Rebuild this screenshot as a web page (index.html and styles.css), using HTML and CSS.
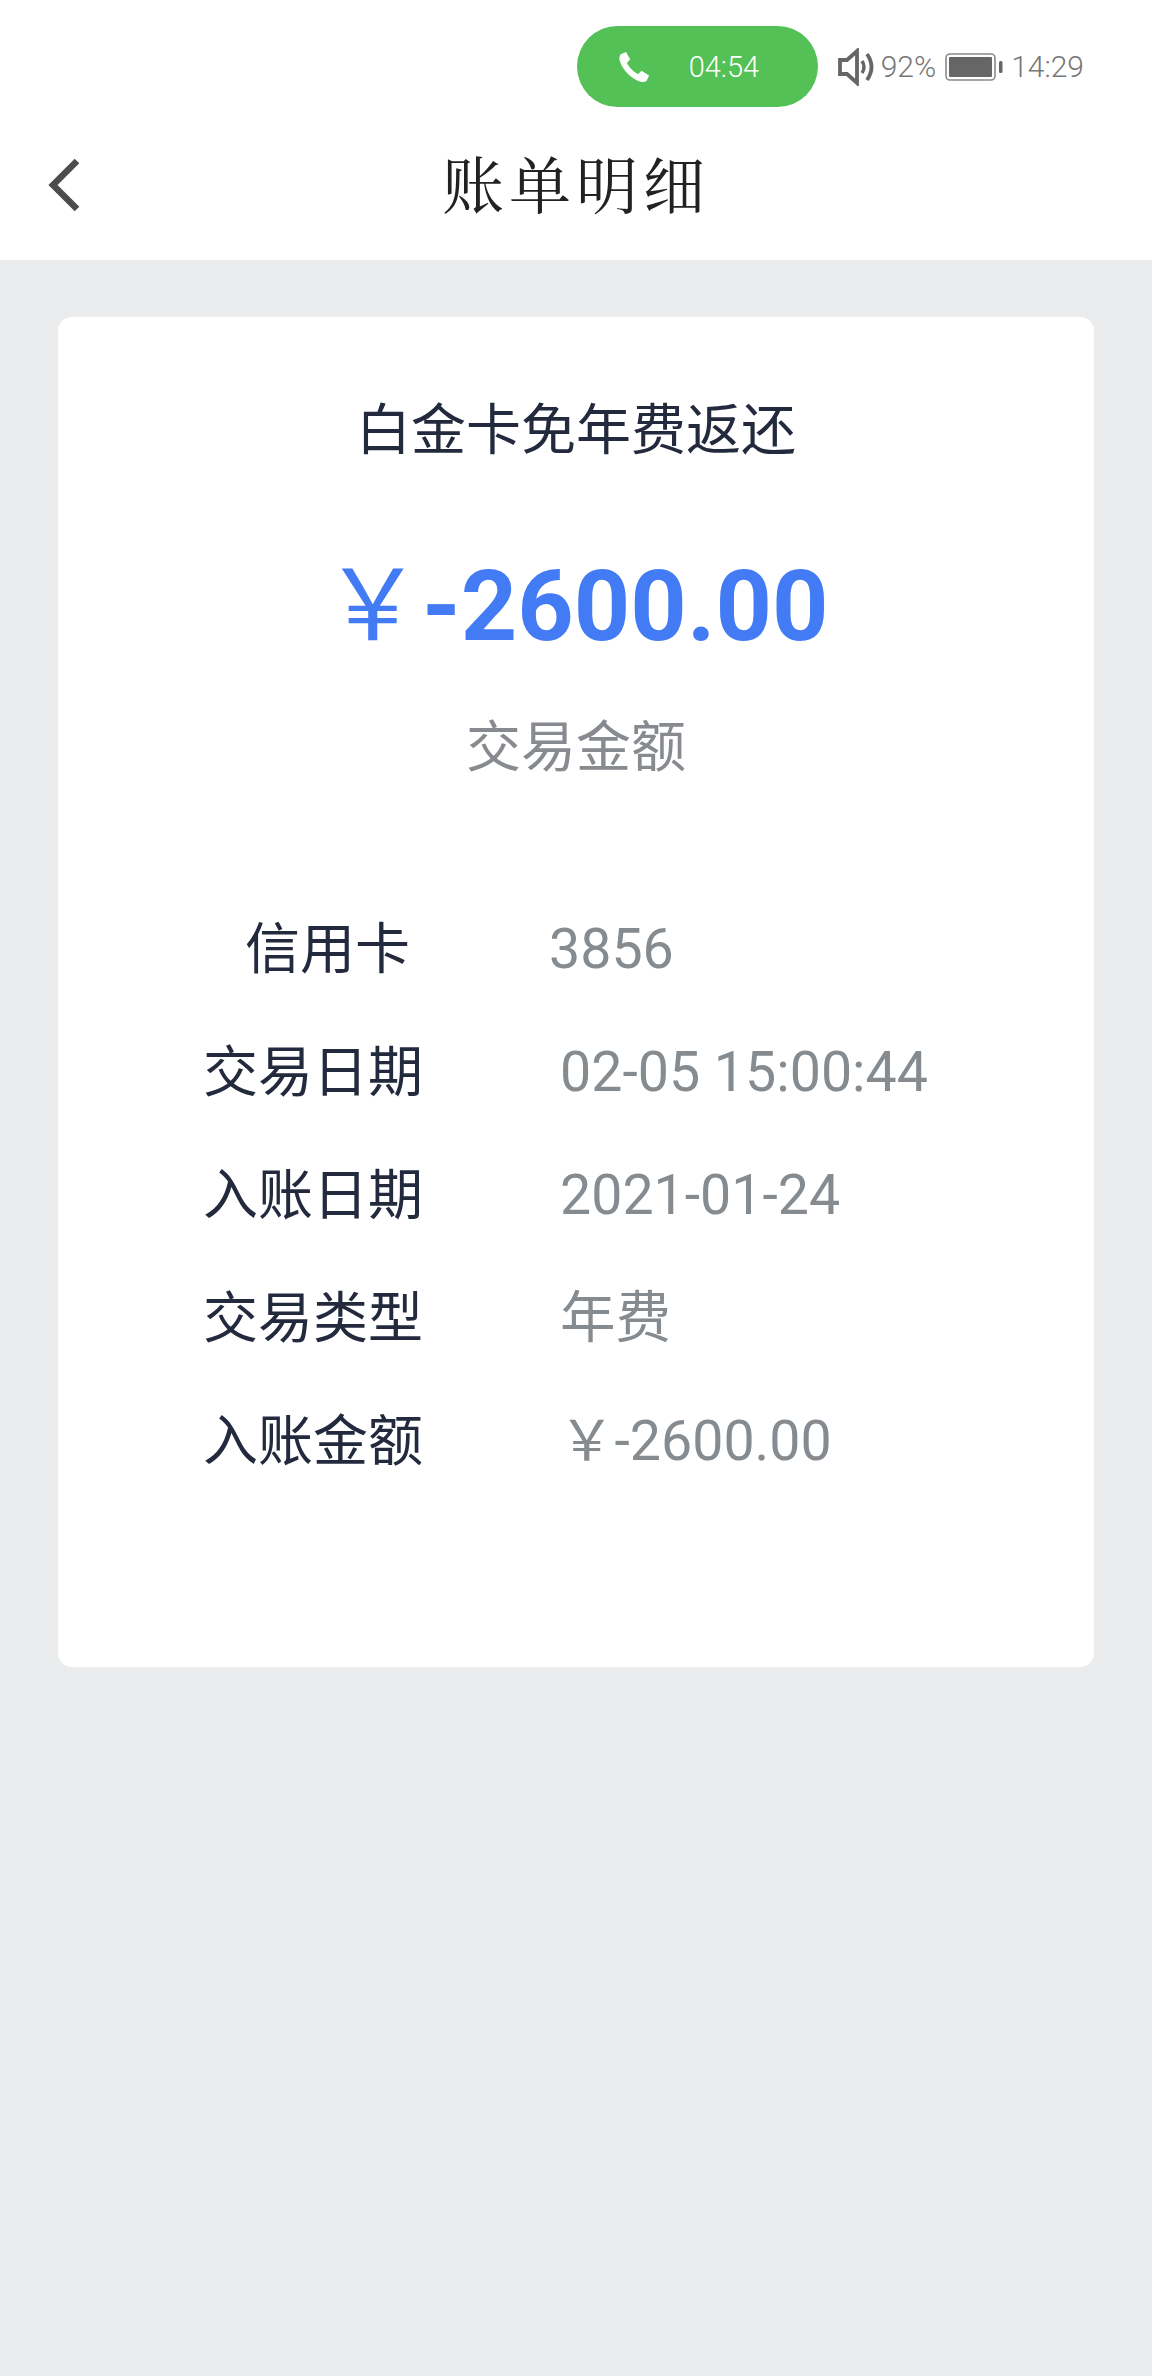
FILE: index.html
```html
<!DOCTYPE html>
<html lang="zh-CN">
<head>
    <meta charset="UTF-8">
    <meta name="viewport" content="width=device-width, initial-scale=1.0">
    <title>账单明细</title>
    <link rel="stylesheet" href="styles.css">
</head>
<body>
    <header class="header">
        <div class="status-bar">
            <div class="call-pill">
                <svg class="call-icon" viewBox="0 0 34 34">
                    <path d="M3 3.5 L8.5 1 L13 9 L9.5 12.5 C11.5 17 16.5 22.5 21.5 24.5 L25 21 L33 26 L30.5 31.5 C29 33 26 33.5 23 32.5 C13 29 5 20 2 11 C1 8 1.5 5 3 3.5 Z" fill="#fff"/>
                </svg>
                <span class="call-time">04:54</span>
            </div>
            <svg class="volume-icon" viewBox="0 0 38 38">
                <path d="M2 12 H9 L19 3 V35 L9 26 H2 Z" fill="none" stroke="#666" stroke-width="3.8"/>
                <path d="M24 13 Q28 19 24 25" fill="none" stroke="#666" stroke-width="3.4"/>
                <path d="M29 6 Q38 19 29 32" fill="none" stroke="#666" stroke-width="3.8"/>
            </svg>
            <span class="status-text percent">92%</span>
            <svg class="battery-icon" viewBox="0 0 58 30">
                <rect x="1" y="2" width="49" height="26" rx="4" fill="none" stroke="#8a8a8a" stroke-width="1.6"/>
                <rect x="4" y="5" width="43" height="20" rx="1" fill="#666"/>
                <rect x="54" y="9" width="3.5" height="12" rx="1.5" fill="#666"/>
            </svg>
            <span class="status-text">14:29</span>
        </div>
        <div class="nav-bar">
            <svg class="back-icon" viewBox="0 0 36 54">
                <path d="M31 3 L7 27 L31 51" fill="none" stroke="#4d4d4d" stroke-width="6.5"/>
            </svg>
            <h1 class="page-title">账单明细</h1>
        </div>
    </header>

    <main class="card">
        <h2 class="card-title">白金卡免年费返还</h2>
        <p class="amount"><span class="amount-yen">￥</span>-2600.00</p>
        <p class="amount-label">交易金额</p>

        <div class="rows">
            <div class="row row-card">
                <span class="row-label">信用卡</span>
                <span class="row-value">3856</span>
            </div>
            <div class="row">
                <span class="row-label">交易日期</span>
                <span class="row-value">02-05 15:00:44</span>
            </div>
            <div class="row">
                <span class="row-label">入账日期</span>
                <span class="row-value">2021-01-24</span>
            </div>
            <div class="row">
                <span class="row-label">交易类型</span>
                <span class="row-value">年费</span>
            </div>
            <div class="row row-money">
                <span class="row-label">入账金额</span>
                <span class="row-value">￥-2600.00</span>
            </div>
        </div>
    </main>
</body>
</html>
```

FILE: styles.css
```css
* {
    box-sizing: border-box;
}
html, body {
    margin: 0;
    padding: 0;
}
body {
    min-height: 2376px;
    background-color: #ebecee;
    font-family: Roboto, "Noto Sans CJK SC", sans-serif;
}
.header {
    background-color: #fff;
    height: 260px;
}
.status-bar {
    height: 134px;
    padding: 26px 68px 0 0;
    display: flex;
    justify-content: flex-end;
    align-items: flex-start;
}
.status-bar > svg,
.status-text {
    margin-top: 22px;
}
.call-pill {
    width: 241px;
    height: 81px;
    border-radius: 41px;
    background-color: #53c156;
    display: flex;
    align-items: center;
    padding-left: 41px;
    margin-right: 20px;
}
.call-icon {
    width: 32px;
    height: 32px;
}
.call-time {
    margin-left: 39px;
    color: #fff;
    font-size: 29px;
    font-weight: 300;
}
.volume-icon {
    width: 38px;
    height: 38px;
    margin-right: 5px;
}
.status-text {
    color: #777;
    font-size: 30px;
    font-weight: 300;
    line-height: 38px;
}
.battery-icon {
    width: 58px;
    height: 30px;
    margin: 26px 8px 0 9px;
}
.status-bar > .battery-icon {
    margin-top: 26px;
}
.nav-bar {
    height: 126px;
    padding-bottom: 28px;
    display: flex;
    align-items: center;
    justify-content: center;
    position: relative;
}
.back-icon {
    position: absolute;
    left: 46px;
    top: 24px;
    width: 36px;
    height: 54px;
}
.page-title {
    margin: 0;
    font-family: "Noto Serif CJK SC", "Noto Sans CJK SC", serif;
    font-size: 62px;
    line-height: 72px;
    font-weight: 400;
    letter-spacing: 5px;
    color: #222;
}
.card {
    width: 1036px;
    height: 1350px;
    margin: 57px 0 0 58px;
    padding-top: 76px;
    background-color: #fff;
    border-radius: 14px;
    text-align: center;
}
.card-title {
    margin: 0;
    font-family: "Noto Sans CJK SC", sans-serif;
    font-size: 55px;
    font-weight: 400;
    line-height: 64px;
    color: #232a3e;
}
.amount {
    margin: 94px 0 0;
    font-size: 98.5px;
    font-weight: 700;
    line-height: 112px;
    color: #437bf5;
}
.amount-yen {
    font-weight: 400;
}
.amount-label {
    margin: 47px 0 0;
    font-family: "Noto Sans CJK SC", sans-serif;
    font-size: 55px;
    line-height: 64px;
    color: #878b8f;
}
.rows {
    margin-top: 143px;
    display: flex;
    flex-direction: column;
    gap: 59px;
    text-align: left;
}
.row {
    display: flex;
    align-items: baseline;
    height: 64px;
    line-height: 64px;
}
.row-label {
    width: 502px;
    padding-left: 145px;
    font-size: 55px;
    color: #232a3e;
}
.row-value {
    font-size: 55.5px;
    color: #868b90;
}
.row-card .row-label {
    width: 491px;
    padding-left: 187px;
}
.row-money .row-label {
    width: 501px;
}
```
